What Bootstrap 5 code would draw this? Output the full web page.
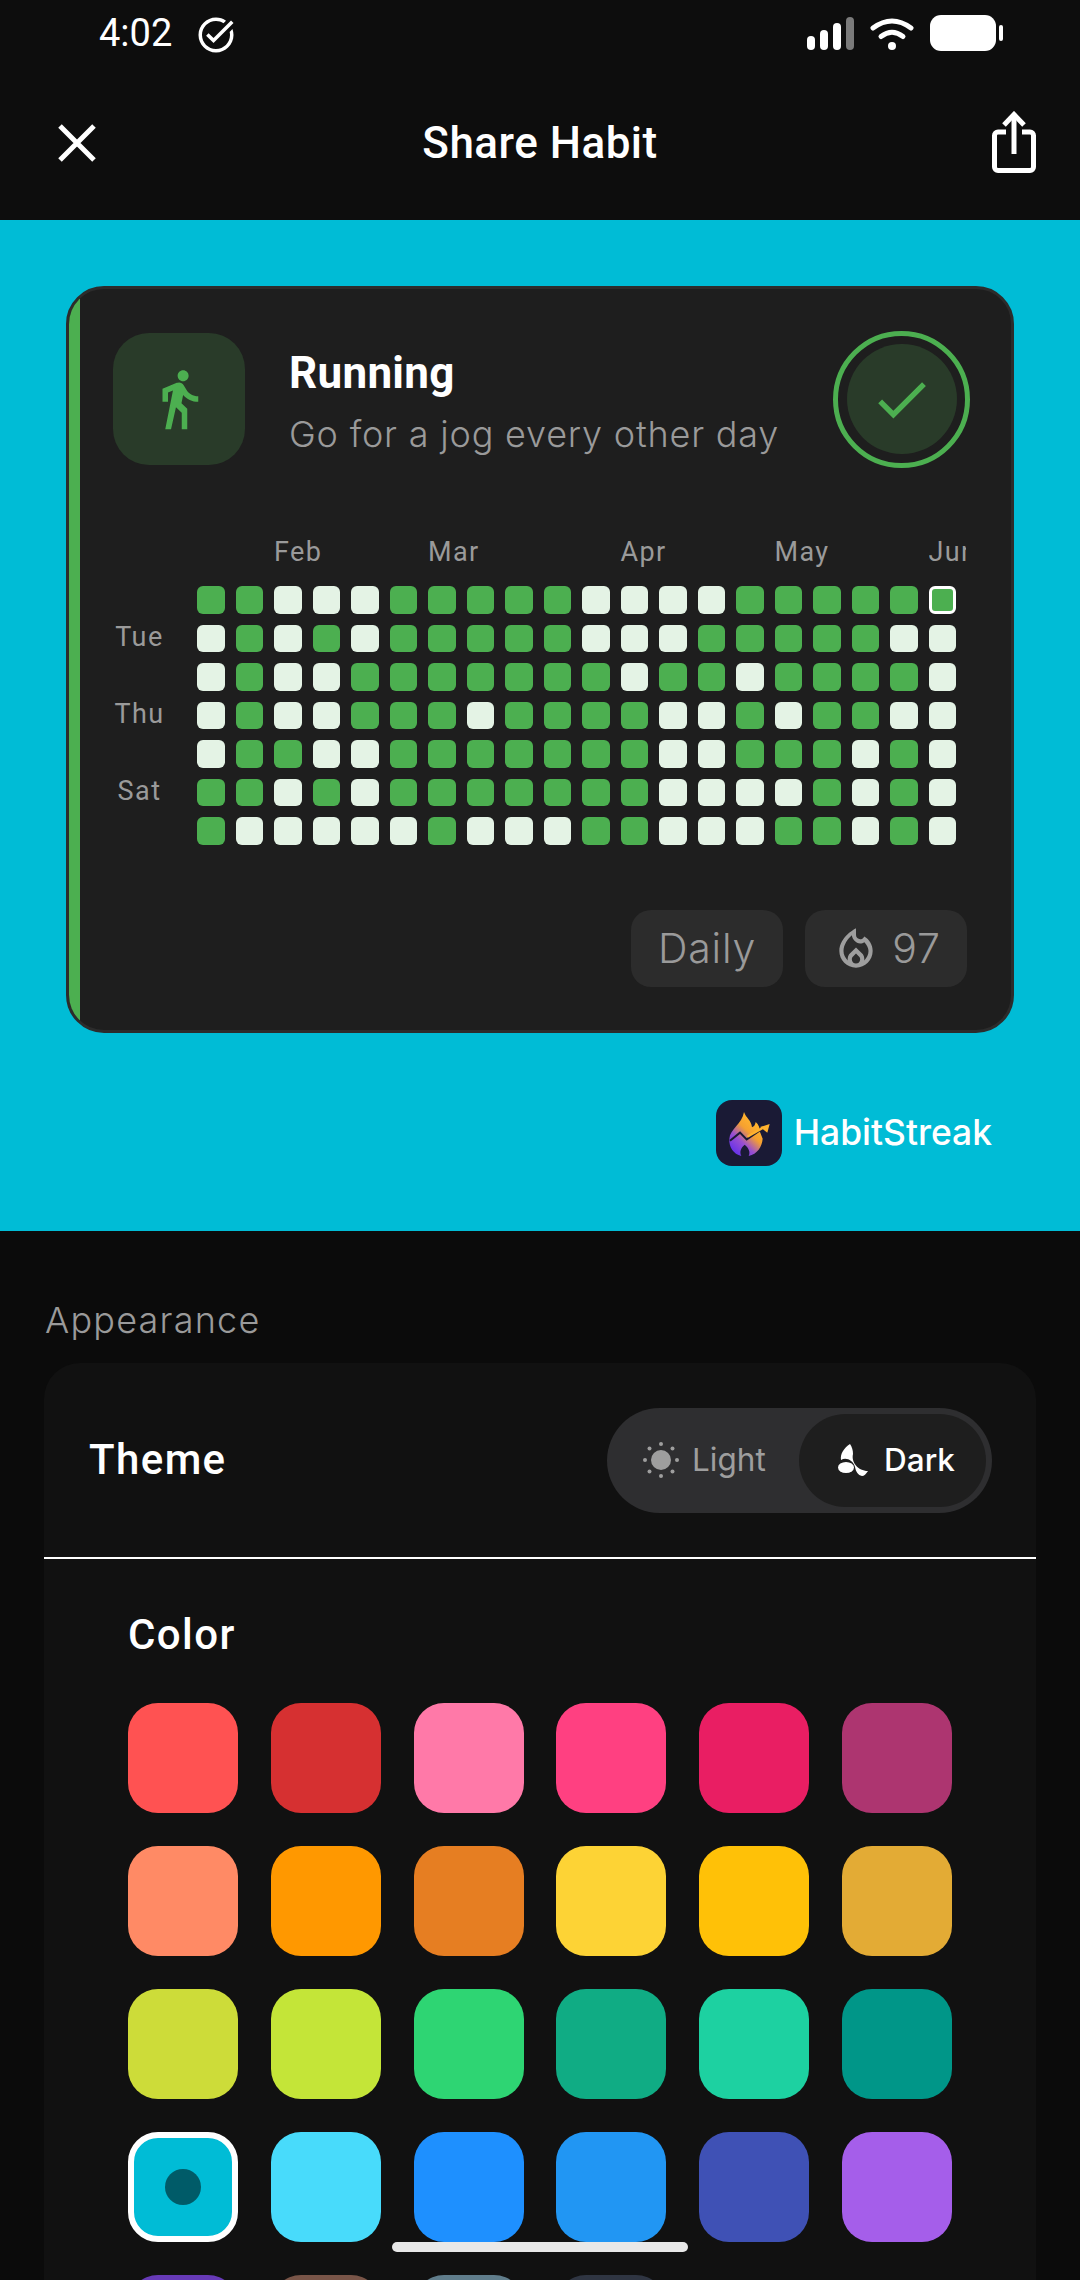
<!DOCTYPE html>
<html lang="en">
<head>
    <meta charset="UTF-8">
    <meta name="viewport" content="width=device-width, initial-scale=1.0">
    <title>Share Habit</title>
    <link rel="stylesheet" href="https://cdn.jsdelivr.net/npm/bootstrap@5.3.0/dist/css/bootstrap.min.css">
    <script defer src="https://cdn.jsdelivr.net/npm/bootstrap@5.3.0/dist/js/bootstrap.bundle.min.js"></script>
    <style>
        html, body { height: 2280px; overflow: hidden; }
        body {
            background: #0b0b0b;
            color: #fff;
            font-family: Roboto, "Liberation Sans", sans-serif;
            position: relative;
        }
        .top-area { background: #0d0d0d; height: 220px; }
        .status-row { height: 66px; padding: 0 77px 0 99px; }
        .status-time { font-size: 38px; line-height: 1; }
        .status-check { margin-left: 22.5px; margin-top: 4px; }
        .status-icons { gap: 16px; }
        .app-row { height: 154px; padding: 0 44px 0 58px; }
        .app-title {
            position: absolute; left: 0; right: 0; text-align: center;
            font-size: 44px; font-weight: 500; line-height: 1; letter-spacing: .5px;
        }
        .share-icon { margin-bottom: 2px; }
        /* share preview */
        .preview { background: #00bcd6; height: 1011px; padding: 66px 66px 0; }
        .habit-card {
            height: 747px;
            background: #1e1e1e;
            border: 3px solid #2c2c2c;
            border-radius: 38px;
            overflow: hidden;
        }
        .habit-inner {
            height: 100%;
            border-left: 11px solid #4caf50;
            padding: 44px 44px 0 33px;
        }
        .habit-icon {
            width: 132px; height: 132px; border-radius: 36px;
            background: #293b29;
        }
        .habit-text { margin-left: 44px; padding-top: 4px; }
        .habit-name { font-size: 44px; font-weight: 700; line-height: 1; margin-bottom: 21px; letter-spacing: .3px; }
        .habit-desc {
            font-family: Inter, "Noto Sans", sans-serif; font-weight: 300;
            font-size: 36px; line-height: 1; color: #9a9a9a; letter-spacing: .8px;
        }
        .done-ring {
            width: 137px; height: 137px; border-radius: 50%;
            border: 5px solid #4caf50; margin: -3px -3px -3px 0;
        }
        .done-fill { width: 110px; height: 110px; border-radius: 50%; background: #293b29; }
        .heat-wrap { margin-top: 74px; }
        .heat-grid {
            display: grid;
            grid-template-columns: 73px repeat(20, 27.5px);
            grid-template-rows: 36px repeat(7, 27.5px);
            gap: 11px;
        }
        .heat-month {
            font-size: 27px; line-height: 30px; height: 36px; color: #9a9a9a; white-space: nowrap;
            letter-spacing: 1.4px; grid-row: 1; margin-top: -2px;
        }
        .heat-month.last-month { width: 37px; overflow: hidden; }
        .heat-day {
            font-size: 27px; line-height: 25px; color: #9a9a9a; text-align: center;
            letter-spacing: 1.4px; padding-right: 20px; white-space: nowrap;
        }
        .heat-cell { border-radius: 6px; background: #e4f3e5; }
        .heat-cell.on { background: #4caf50; }
        .heat-cell.today { border: 3px solid #fff; }
        .chip-row { margin-top: 65.5px; gap: 22px; }
        .info-chip {
            height: 77px; border-radius: 20px; background: #2c2c2c; color: #9a9a9a;
            font-family: Inter, "Noto Sans", sans-serif; font-weight: 300;
            font-size: 41px; line-height: 1; letter-spacing: .8px;
        }
        .chip-daily { width: 152px; }
        .chip-streak { width: 162px; gap: 11px; }
        .brand-row { margin-top: 67px; padding-right: 22px; }
        .brand-logo { width: 66px; height: 66px; border-radius: 16px; background: #1a1a35; }
        .brand-name {
            font-family: Inter, "Noto Sans", sans-serif; font-weight: 500;
            font-size: 35.4px; line-height: 1; color: #fff; margin-left: 12px;
        }
        /* settings */
        .section-label {
            font-family: Inter, "Noto Sans", sans-serif; font-weight: 300;
            font-size: 36px; line-height: 1; color: #9a9a9a; letter-spacing: 1.2px;
            padding: 71px 0 0 45px; height: 132px;
        }
        .settings-panel {
            margin: 0 44px; background: #111; border-radius: 36px 36px 0 0; height: 1000px;
        }
        .theme-row { height: 194px; padding: 0 44px 0 45px; }
        .row-title { font-size: 42px; font-weight: 500; line-height: 1; letter-spacing: 1.4px; }
        .theme-toggle {
            width: 385px; height: 105px; border-radius: 53px; background: #2e2e30;
            padding: 6px; font-family: Inter, "Noto Sans", sans-serif; font-size: 31.5px;
        }
        .toggle-light { color: #9e9e9e; padding-left: 30px; gap: 13px; }
        .toggle-dark {
            width: 187px; border-radius: 47px; background: #1e1e1e; color: #fff;
            font-weight: 500; padding-left: 8px; gap: 16px;
        }
        .panel-rule { height: 2px; background: #fff; }
        .color-wrap { padding: 55px 0 0 84px; }
        .color-grid {
            display: grid;
            grid-template-columns: repeat(6, 110px);
            grid-auto-rows: 110px;
            column-gap: 32.8px;
            row-gap: 33px;
            margin-top: 46.5px;
        }
        .color-swatch { border-radius: 30px; }
        .color-swatch.picked { border: 6px solid #fff; }
        .picked-dot { width: 36px; height: 36px; border-radius: 50%; background: #005b68; }
        .home-bar {
            position: absolute; left: 392px; bottom: 28px; width: 296px; height: 10px;
            border-radius: 5px; background: #e8e8e8;
        }
    </style>
</head>
<body>
    <div class="top-area">
        <div class="status-row d-flex align-items-center">
            <span class="status-time">4:02</span>
            <svg class="status-check" width="42" height="42" viewBox="0 0 24 24" fill="#fff"><path d="M22 5.18L10.59 16.6l-4.24-4.24 1.41-1.41 2.83 2.83 10-10L22 5.18zm-2.21 5.04c.13.57.21 1.17.21 1.78 0 4.42-3.58 8-8 8s-8-3.58-8-8 3.58-8 8-8c1.58 0 3.04.46 4.28 1.25l1.44-1.44C16.1 2.67 14.13 2 12 2 6.48 2 2 6.48 2 12s4.48 10 10 10 10-4.48 10-10c0-1.19-.22-2.33-.6-3.39l-1.61 1.61z"/></svg>
            <div class="status-icons ms-auto d-flex align-items-center">
                <svg width="47" height="33" viewBox="0 0 47 33">
                    <rect x="0" y="19" width="8" height="14" rx="4" fill="#fff"/>
                    <rect x="13" y="13" width="8" height="20" rx="4" fill="#fff"/>
                    <rect x="26" y="6" width="8" height="27" rx="4" fill="#fff"/>
                    <rect x="39" y="0" width="8" height="33" rx="4" fill="#7a7a7a"/>
                </svg>
                <svg width="44" height="33" viewBox="0 0 44 33" fill="none" stroke="#fff" stroke-width="5" stroke-linecap="round">
                    <path d="M3 11Q22 -3 41 11"/>
                    <path d="M11 19.5Q22 11 33 19.5"/>
                    <circle cx="22" cy="29" r="4" fill="#fff" stroke="none"/>
                </svg>
                <svg width="73" height="36" viewBox="0 0 73 36">
                    <rect x="0" y="0" width="66" height="36" rx="11" fill="#fff"/>
                    <rect x="69" y="10" width="4" height="16" rx="2" fill="#fff"/>
                </svg>
            </div>
        </div>
        <div class="app-row d-flex align-items-center justify-content-between position-relative">
            <svg width="38" height="38" viewBox="0 0 38 38" stroke="#fff" stroke-width="5"><path d="M2 2L36 36M36 2L2 36"/></svg>
            <div class="app-title">Share Habit</div>
            <svg class="share-icon" width="44" height="62" viewBox="0 0 44 62" fill="none" stroke="#fff" stroke-width="5">
                <path d="M14 21H6a3.500 3.500 0 0 0-3.500 3.500V56a3.500 3.500 0 0 0 3.500 3.500H38a3.500 3.500 0 0 0 3.500-3.500V24.500A3.500 3.500 0 0 0 38 21H30"/>
                <path d="M22 43V4"/>
                <path d="M12 14L22 3.500L32 14"/>
            </svg>
        </div>
    </div>

    <div class="preview">
        <div class="habit-card">
            <div class="habit-inner">
                <div class="d-flex align-items-center">
                    <div class="habit-icon d-flex align-items-center justify-content-center">
                        <svg width="66" height="66" viewBox="0 0 24 24" fill="#4caf50"><path d="M13.500 5.500c1.100 0 2-.9 2-2s-.9-2-2-2-2 .9-2 2 .9 2 2 2zM9.800 8.900L7 23h2.100l1.800-8 2.100 2v6h2v-7.500l-2.100-2 .6-3C14.800 12 16.800 13 19 13v-2c-1.900 0-3.500-1-4.300-2.400l-1-1.600c-.4-.6-1-1-1.700-1-.3 0-.5.1-.8.1L6 8.300V13h2V9.600l1.800-.7"/></svg>
                    </div>
                    <div class="habit-text">
                        <div class="habit-name">Running</div>
                        <div class="habit-desc">Go for a jog every other day</div>
                    </div>
                    <div class="done-ring ms-auto d-flex align-items-center justify-content-center">
                        <div class="done-fill d-flex align-items-center justify-content-center">
                            <svg width="65" height="65" viewBox="0 0 24 24" fill="#4caf50"><path d="M9 16.170L4.830 12l-1.420 1.410L9 19 21 7l-1.410-1.410z"/></svg>
                        </div>
                    </div>
                </div>

                <div class="heat-wrap">
                    <div class="heat-grid" id="heatGrid">
                        <div class="heat-month" style="grid-column:4 / span 3">Feb</div>
                        <div class="heat-month" style="grid-column:8 / span 3">Mar</div>
                        <div class="heat-month" style="grid-column:13 / span 3">Apr</div>
                        <div class="heat-month" style="grid-column:17 / span 3">May</div>
                        <div class="heat-month last-month" style="grid-column:21">Jun</div>
                    </div>
                </div>

                <div class="chip-row d-flex justify-content-end">
                    <div class="info-chip chip-daily d-flex align-items-center justify-content-center">Daily</div>
                    <div class="info-chip chip-streak d-flex align-items-center justify-content-center">
                        <svg width="50" height="50" viewBox="0 0 24 24" fill="#9e9e9e"><path d="M16 6l-.44.55c-.42.52-.98.75-1.540.75C13 7.300 12 6.520 12 5.300V2S4 6 4 13c0 4.420 3.580 8 8 8s8-3.580 8-8c0-2.960-1.610-5.620-4-7zm-4 13c-1.100 0-2-.9-2-2 0-.55.22-1.050.59-1.410L12 14.200l1.410 1.390c.37.36.59.86.59 1.410 0 1.100-.9 2-2 2zm3.960-1.500c.04-.32.21-1.530-.64-2.940L12 11.250l-3.320 3.310c-.85 1.410-.68 2.620-.64 2.940C6.800 16.270 6 14.730 6 13c0-3.160 2.110-5.840 4.010-7.590.21 1.900 1.840 3.890 4.010 3.890.73 0 1.430-.22 2.020-.6C17.290 10.110 18 11.490 18 13c0 1.730-.8 3.270-2.040 4.500z"/></svg>
                        <span>97</span>
                    </div>
                </div>
            </div>
        </div>
        <div class="brand-row d-flex align-items-center justify-content-end">
            <div class="brand-logo d-flex align-items-center justify-content-center">
                <svg width="50" height="55" viewBox="0 0 150 165">
                    <defs>
                        <linearGradient id="flameGrad" x1="0.1" y1="0.85" x2="0.6" y2="0.15">
                            <stop offset="0" stop-color="#6a35e8"/>
                            <stop offset="0.35" stop-color="#9a4fd0"/>
                            <stop offset="0.7" stop-color="#f5a030"/>
                            <stop offset="1" stop-color="#ffb22e"/>
                        </linearGradient>
                    </defs>
                    <path fill="url(#flameGrad)" d="M60 18C66 36 82 42 84 64C90 62 94 56 95 48C104 56 108 66 108 78L116 98C114 122 100 144 74 150C80 138 74 126 62 116C50 126 46 138 52 150C28 144 14 122 16 98C18 70 54 54 60 18Z"/>
                    <path fill="none" stroke="#1a1a35" stroke-width="6" d="M18 104L48 80L68 100L112 70"/>
                    <path fill="none" stroke="#ffb22e" stroke-width="7" d="M70 92L116 66"/>
                    <path fill="#ffb22e" d="M137 54L130 80L108 63Z"/>
                </svg>
            </div>
            <span class="brand-name">HabitStreak</span>
        </div>
    </div>

    <div class="section-label">Appearance</div>
    <div class="settings-panel">
        <div class="theme-row d-flex align-items-center justify-content-between">
            <div class="row-title">Theme</div>
            <div class="theme-toggle d-flex align-items-center justify-content-between">
                <div class="toggle-light d-flex align-items-center">
                    <svg width="36" height="36" viewBox="0 0 36 36" fill="#9e9e9e">
                        <circle cx="18" cy="18" r="10"/>
                        <circle cx="18" cy="2" r="2"/><circle cx="18" cy="34" r="2"/>
                        <circle cx="2" cy="18" r="2"/><circle cx="34" cy="18" r="2"/>
                        <circle cx="6.500" cy="6.500" r="2"/><circle cx="29.500" cy="6.500" r="2"/>
                        <circle cx="6.500" cy="29.500" r="2"/><circle cx="29.500" cy="29.500" r="2"/>
                    </svg>
                    <span>Light</span>
                </div>
                <div class="toggle-dark h-100 d-flex align-items-center justify-content-center">
                    <svg width="30" height="32" viewBox="0 0 30 32" fill="#fff">
                        <path d="M12 0C6 4 2 10 3 16C8 13 15 16 17 23C18 28 20 31 24 32C26 32 28 30 30 27C20 27 13 18 15 10C15 6 14 3 12 0Z"/>
                        <ellipse cx="8" cy="23.500" rx="8" ry="5.500"/>
                    </svg>
                    <span>Dark</span>
                </div>
            </div>
        </div>
        <div class="panel-rule"></div>
        <div class="color-wrap">
            <div class="row-title">Color</div>
            <div class="color-grid" id="colorGrid"></div>
        </div>
    </div>
    <div class="home-bar"></div>

    <script>
        // 1 = green day, 0 = pale day; last cell of the first row is today
        const heatRows = [
            "11000111110000111111",
            "01010111110001111100",
            "01001111111011011110",
            "01001110111100101100",
            "01100111111100111010",
            "11010111111100001010",
            "10000010001100011010"
        ];
        const dayLabels = { 1: "Tue", 3: "Thu", 5: "Sat" };
        const heatGrid = document.getElementById("heatGrid");
        heatRows.forEach((row, r) => {
            if (dayLabels[r]) {
                const label = document.createElement("div");
                label.className = "heat-day";
                label.textContent = dayLabels[r];
                label.style.gridArea = (r + 2) + " / 1";
                heatGrid.appendChild(label);
            }
            [...row].forEach((v, c) => {
                const cell = document.createElement("div");
                cell.className = "heat-cell" + (v === "1" ? " on" : "") + (r === 0 && c === 19 ? " today" : "");
                cell.style.gridArea = (r + 2) + " / " + (c + 2);
                heatGrid.appendChild(cell);
            });
        });

        const swatches = [
            "#ff5252", "#d63031", "#ff79a8", "#ff4081", "#e91e63", "#ad3570",
            "#ff8a65", "#ff9800", "#e67e22", "#fdd335", "#ffc107", "#e3ab35",
            "#cddc39", "#c4e538", "#2ed573", "#10ac84", "#1dd1a1", "#009688",
            "#00bcd6", "#48dbfb", "#1e90ff", "#2196f3", "#3f51b5", "#a55eea",
            "#673ab7", "#795548", "#607d8b", "#2f3542"
        ];
        const colorGrid = document.getElementById("colorGrid");
        swatches.forEach((color, i) => {
            const swatch = document.createElement("div");
            swatch.className = "color-swatch d-flex align-items-center justify-content-center";
            swatch.style.background = color;
            if (i === 18) {
                swatch.classList.add("picked");
                swatch.innerHTML = '<div class="picked-dot"></div>';
            }
            colorGrid.appendChild(swatch);
        });
    </script>
</body>
</html>
